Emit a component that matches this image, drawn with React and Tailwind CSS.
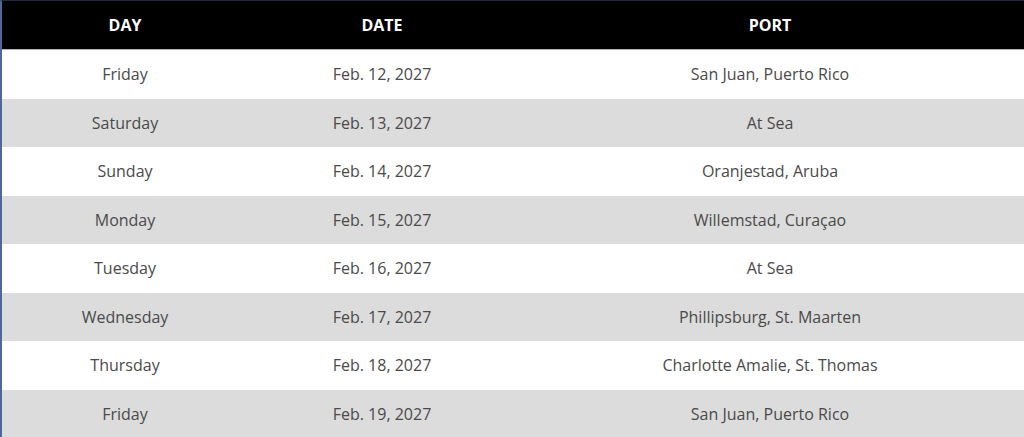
export default function App() {
  const rows = [
    ["Friday", "Feb. 12, 2027", "San Juan, Puerto Rico"],
    ["Saturday", "Feb. 13, 2027", "At Sea"],
    ["Sunday", "Feb. 14, 2027", "Oranjestad, Aruba"],
    ["Monday", "Feb. 15, 2027", "Willemstad, Curaçao"],
    ["Tuesday", "Feb. 16, 2027", "At Sea"],
    ["Wednesday", "Feb. 17, 2027", "Phillipsburg, St. Maarten"],
    ["Thursday", "Feb. 18, 2027", "Charlotte Amalie, St. Thomas"],
    ["Friday", "Feb. 19, 2027", "San Juan, Puerto Rico"],
  ];
  return (
    <div
      className="w-[1024px] h-[437px] overflow-hidden bg-white border-t border-t-[#1e2a44] border-l-2 border-l-[#4a6b9a]"
      style={{ fontFamily: '"Open Sans", "Noto Sans", sans-serif' }}
    >
      <div className="grid grid-cols-[246px_268px_1fr] h-[49px] bg-black text-white font-bold text-[16px] items-center text-center border-b border-b-[#b5b5b5]">
        <div>DAY</div>
        <div>DATE</div>
        <div>PORT</div>
      </div>
      {rows.map((r, i) => (
        <div
          key={i}
          className={`grid grid-cols-[246px_268px_1fr] h-[48.5px] items-center text-center text-[16px] text-[#4a4a4a] ${i % 2 === 1 ? "bg-[#dcdcdc]" : "bg-white"}`}
        >
          <div>{r[0]}</div>
          <div>{r[1]}</div>
          <div>{r[2]}</div>
        </div>
      ))}
    </div>
  );
}
